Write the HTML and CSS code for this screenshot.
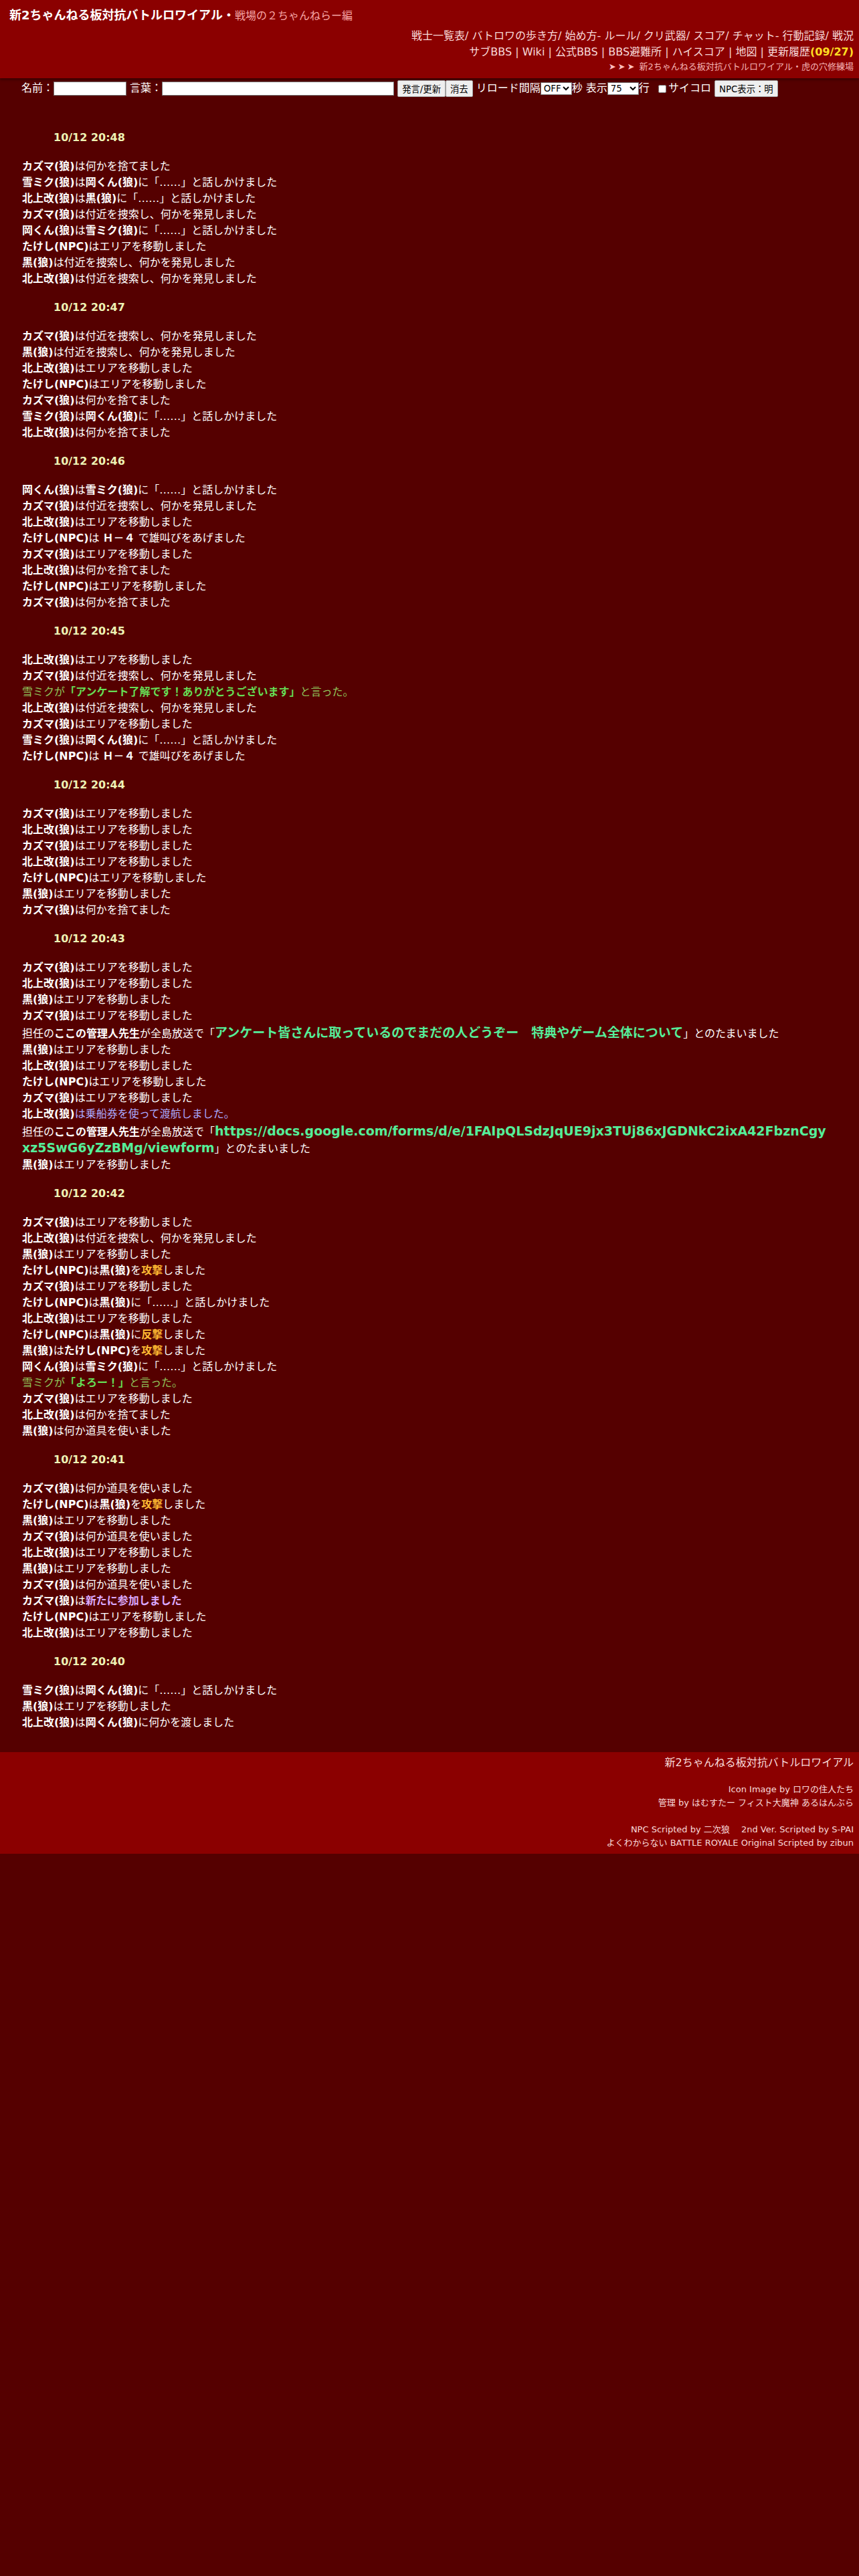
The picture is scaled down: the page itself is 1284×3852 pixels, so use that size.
FILE: index.html
```html
<!DOCTYPE html>
<html lang="ja">
<head>
    <meta charset="UTF-8">
    <title>新2ちゃんねる板対抗バトルロワイアル・戦場の２ちゃんねらー編</title>
    <link rel="stylesheet" href="styles.css">
</head>
<body>
    <div class="hheader">
        <div class="ttitle"><b>新2ちゃんねる板対抗バトルロワイアル・</b><span class="ssub">戦場の２ちゃんねらー編</span></div>
        <div class="nnav">戦士一覧表/ バトロワの歩き方/ 始め方- ルール/ クリ武器/ スコア/ チャット- 行動記録/ 戦況</div>
        <div class="nnav">サブBBS | Wiki | 公式BBS | BBS避難所 | ハイスコア | 地図 | 更新履歴<b class="ddate">(09/27)</b></div>
        <div class="nnav ssmall"><span class="aarrow">&#10148;&#10148;&#10148;</span> 新2ちゃんねる板対抗バトルロワイアル・虎の穴修練場</div>
    </div>

    <form class="cchat">
        名前：<input type="text" class="iname">
        言葉：<input type="text" class="iword">
        <button type="button">発言/更新</button><button type="button">消去</button>
        リロード間隔<select><option>OFF</option></select>秒
        表示<select class="sline"><option>75</option></select>行
        <input type="checkbox">サイコロ
        <button type="button">NPC表示：明</button>
    </form>

    <div class="llog">
        <div class="bblock">
            <div class="ttime">10/12 20:48</div>
            <div><b>カズマ(狼)</b>は何かを捨てました</div>
            <div><b>雪ミク(狼)</b>は<b>岡くん(狼)</b>に「……」と話しかけました</div>
            <div><b>北上改(狼)</b>は<b>黒(狼)</b>に「……」と話しかけました</div>
            <div><b>カズマ(狼)</b>は付近を捜索し、何かを発見しました</div>
            <div><b>岡くん(狼)</b>は<b>雪ミク(狼)</b>に「……」と話しかけました</div>
            <div><b>たけし(NPC)</b>はエリアを移動しました</div>
            <div><b>黒(狼)</b>は付近を捜索し、何かを発見しました</div>
            <div><b>北上改(狼)</b>は付近を捜索し、何かを発見しました</div>
        </div>
        <div class="bblock">
            <div class="ttime">10/12 20:47</div>
            <div><b>カズマ(狼)</b>は付近を捜索し、何かを発見しました</div>
            <div><b>黒(狼)</b>は付近を捜索し、何かを発見しました</div>
            <div><b>北上改(狼)</b>はエリアを移動しました</div>
            <div><b>たけし(NPC)</b>はエリアを移動しました</div>
            <div><b>カズマ(狼)</b>は何かを捨てました</div>
            <div><b>雪ミク(狼)</b>は<b>岡くん(狼)</b>に「……」と話しかけました</div>
            <div><b>北上改(狼)</b>は何かを捨てました</div>
        </div>
        <div class="bblock">
            <div class="ttime">10/12 20:46</div>
            <div><b>岡くん(狼)</b>は<b>雪ミク(狼)</b>に「……」と話しかけました</div>
            <div><b>カズマ(狼)</b>は付近を捜索し、何かを発見しました</div>
            <div><b>北上改(狼)</b>はエリアを移動しました</div>
            <div><b>たけし(NPC)</b>は <b>Ｈ－４</b> で雄叫びをあげました</div>
            <div><b>カズマ(狼)</b>はエリアを移動しました</div>
            <div><b>北上改(狼)</b>は何かを捨てました</div>
            <div><b>たけし(NPC)</b>はエリアを移動しました</div>
            <div><b>カズマ(狼)</b>は何かを捨てました</div>
        </div>
        <div class="bblock">
            <div class="ttime">10/12 20:45</div>
            <div><b>北上改(狼)</b>はエリアを移動しました</div>
            <div><b>カズマ(狼)</b>は付近を捜索し、何かを発見しました</div>
            <div class="ssay">雪ミクが<b>「アンケート了解です！ありがとうございます」</b>と言った。</div>
            <div><b>北上改(狼)</b>は付近を捜索し、何かを発見しました</div>
            <div><b>カズマ(狼)</b>はエリアを移動しました</div>
            <div><b>雪ミク(狼)</b>は<b>岡くん(狼)</b>に「……」と話しかけました</div>
            <div><b>たけし(NPC)</b>は <b>Ｈ－４</b> で雄叫びをあげました</div>
        </div>
        <div class="bblock">
            <div class="ttime">10/12 20:44</div>
            <div><b>カズマ(狼)</b>はエリアを移動しました</div>
            <div><b>北上改(狼)</b>はエリアを移動しました</div>
            <div><b>カズマ(狼)</b>はエリアを移動しました</div>
            <div><b>北上改(狼)</b>はエリアを移動しました</div>
            <div><b>たけし(NPC)</b>はエリアを移動しました</div>
            <div><b>黒(狼)</b>はエリアを移動しました</div>
            <div><b>カズマ(狼)</b>は何かを捨てました</div>
        </div>
        <div class="bblock">
            <div class="ttime">10/12 20:43</div>
            <div><b>カズマ(狼)</b>はエリアを移動しました</div>
            <div><b>北上改(狼)</b>はエリアを移動しました</div>
            <div><b>黒(狼)</b>はエリアを移動しました</div>
            <div><b>カズマ(狼)</b>はエリアを移動しました</div>
            <div class="bbig">担任の<b>ここの管理人先生</b>が全島放送で「<b class="ccast">アンケート皆さんに取っているのでまだの人どうぞー　特典やゲーム全体について</b>」とのたまいました</div>
            <div><b>黒(狼)</b>はエリアを移動しました</div>
            <div><b>北上改(狼)</b>はエリアを移動しました</div>
            <div><b>たけし(NPC)</b>はエリアを移動しました</div>
            <div><b>カズマ(狼)</b>はエリアを移動しました</div>
            <div><b>北上改(狼)</b><span class="sship">は乗船券を使って渡航しました。</span></div>
            <div class="bbig">担任の<b>ここの管理人先生</b>が全島放送で「<b class="ccast">https://docs.google.com/forms/d/e/1FAIpQLSdzJqUE9jx3TUj86xJGDNkC2ixA42FbznCgy</b><br><b class="ccast">xz5SwG6yZzBMg/viewform</b>」とのたまいました</div>
            <div><b>黒(狼)</b>はエリアを移動しました</div>
        </div>
        <div class="bblock">
            <div class="ttime">10/12 20:42</div>
            <div><b>カズマ(狼)</b>はエリアを移動しました</div>
            <div><b>北上改(狼)</b>は付近を捜索し、何かを発見しました</div>
            <div><b>黒(狼)</b>はエリアを移動しました</div>
            <div><b>たけし(NPC)</b>は<b>黒(狼)</b>を<b class="aatk">攻撃</b>しました</div>
            <div><b>カズマ(狼)</b>はエリアを移動しました</div>
            <div><b>たけし(NPC)</b>は<b>黒(狼)</b>に「……」と話しかけました</div>
            <div><b>北上改(狼)</b>はエリアを移動しました</div>
            <div><b>たけし(NPC)</b>は<b>黒(狼)</b>に<b class="aatk">反撃</b>しました</div>
            <div><b>黒(狼)</b>は<b>たけし(NPC)</b>を<b class="aatk">攻撃</b>しました</div>
            <div><b>岡くん(狼)</b>は<b>雪ミク(狼)</b>に「……」と話しかけました</div>
            <div class="ssay">雪ミクが<b>「よろー！」</b>と言った。</div>
            <div><b>カズマ(狼)</b>はエリアを移動しました</div>
            <div><b>北上改(狼)</b>は何かを捨てました</div>
            <div><b>黒(狼)</b>は何か道具を使いました</div>
        </div>
        <div class="bblock">
            <div class="ttime">10/12 20:41</div>
            <div><b>カズマ(狼)</b>は何か道具を使いました</div>
            <div><b>たけし(NPC)</b>は<b>黒(狼)</b>を<b class="aatk">攻撃</b>しました</div>
            <div><b>黒(狼)</b>はエリアを移動しました</div>
            <div><b>カズマ(狼)</b>は何か道具を使いました</div>
            <div><b>北上改(狼)</b>はエリアを移動しました</div>
            <div><b>黒(狼)</b>はエリアを移動しました</div>
            <div><b>カズマ(狼)</b>は何か道具を使いました</div>
            <div><b>カズマ(狼)</b>は<b class="jjoin">新たに参加しました</b></div>
            <div><b>たけし(NPC)</b>はエリアを移動しました</div>
            <div><b>北上改(狼)</b>はエリアを移動しました</div>
        </div>
        <div class="bblock">
            <div class="ttime">10/12 20:40</div>
            <div><b>雪ミク(狼)</b>は<b>岡くん(狼)</b>に「……」と話しかけました</div>
            <div><b>黒(狼)</b>はエリアを移動しました</div>
            <div><b>北上改(狼)</b>は<b>岡くん(狼)</b>に何かを渡しました</div>
        </div>
    </div>

    <div class="ffooter">
        <div class="ftitle">新2ちゃんねる板対抗バトルロワイアル</div>
        <div class="fcredit">
            Icon Image by ロワの住人たち<br>
            管理 by はむすたー フィスト大魔神 あるはんぶら<br>
            <br>
            NPC Scripted by 二次狼　 2nd Ver. Scripted by S-PAI<br>
            よくわからない BATTLE ROYALE Original Scripted by zibun
        </div>
    </div>
</body>
</html>
```

FILE: styles.css
```css
body {
    margin: 0;
    background-color: #550000;
    color: #ffffff;
    font-family: "DejaVu Sans", "Noto Sans CJK JP", sans-serif;
    font-size: 16px;
}
.hheader {
    background-color: #8b0000;
    padding: 10px 8px 8px 14px;
    box-shadow: 0 2px 4px rgba(0, 0, 0, 0.4);
}
.ttitle {
    font-size: 18px;
    line-height: 26px;
}
.ssub {
    font-size: 16px;
    color: #f5a5a5;
}
.nnav {
    text-align: right;
    line-height: 24px;
    color: #f8dada;
}
.ttitle + .nnav {
    margin-top: 5px;
}
.ddate {
    color: #ffdd22;
}
.ssmall {
    font-size: 13px;
    line-height: 19px;
    color: #f5b5b5;
}
.aarrow {
    color: #ffc0c0;
    letter-spacing: 3px;
}
.cchat {
    margin: 0;
    padding: 2px 32px 0;
    line-height: 26px;
}
.cchat input, .cchat select, .cchat button {
    font-family: "DejaVu Sans", "Noto Sans CJK JP", sans-serif;
    font-size: 13.33px;
    vertical-align: middle;
}
.cchat input[type="text"] {
    height: 21px;
    box-sizing: border-box;
    border: 1px solid #767676;
    padding: 1px 2px;
    margin: 0;
}
.iname {
    width: 109px;
}
.iword {
    width: 347px;
}
.cchat button {
    height: 25px;
    padding: 0 6px;
    margin: 0;
    background-color: #efefef;
    border: 1px solid #a0a0a0;
    border-radius: 2px;
    color: #000;
}
.cchat select {
    height: 19px;
    width: 47px;
    padding: 0;
    border: 1px solid #767676;
    background: #fff;
    color: #000;
}
.cchat input[type="checkbox"] {
    width: 12px;
    height: 12px;
    margin: 0 3px 0 8px;
}
.llog {
    padding: 30px 38px 13px 33px;
    line-height: 24px;
}
.bblock {
    margin-bottom: 19px;
}
.ttime {
    margin: 19px 0 19px 47px;
    font-weight: bold;
    color: #eef2b4;
}
.ssay {
    color: #8fc45a;
}
.ssay b {
    color: #66dd55;
}
.bbig {
    margin-top: 2px;
}
.ccast {
    font-size: 19px;
    line-height: 22px;
    color: #55ee99;
}
.sship {
    color: #aaaaff;
}
.aatk {
    color: #ffbb33;
}
.jjoin {
    color: #ddaaff;
}
.ffooter {
    background-color: #8b0000;
    text-align: right;
    padding: 4px 8px 6px;
    color: #f8dada;
}
.ftitle {
    line-height: 24px;
}
.fcredit {
    margin-top: 18px;
    font-size: 13px;
    line-height: 20px;
}
```
